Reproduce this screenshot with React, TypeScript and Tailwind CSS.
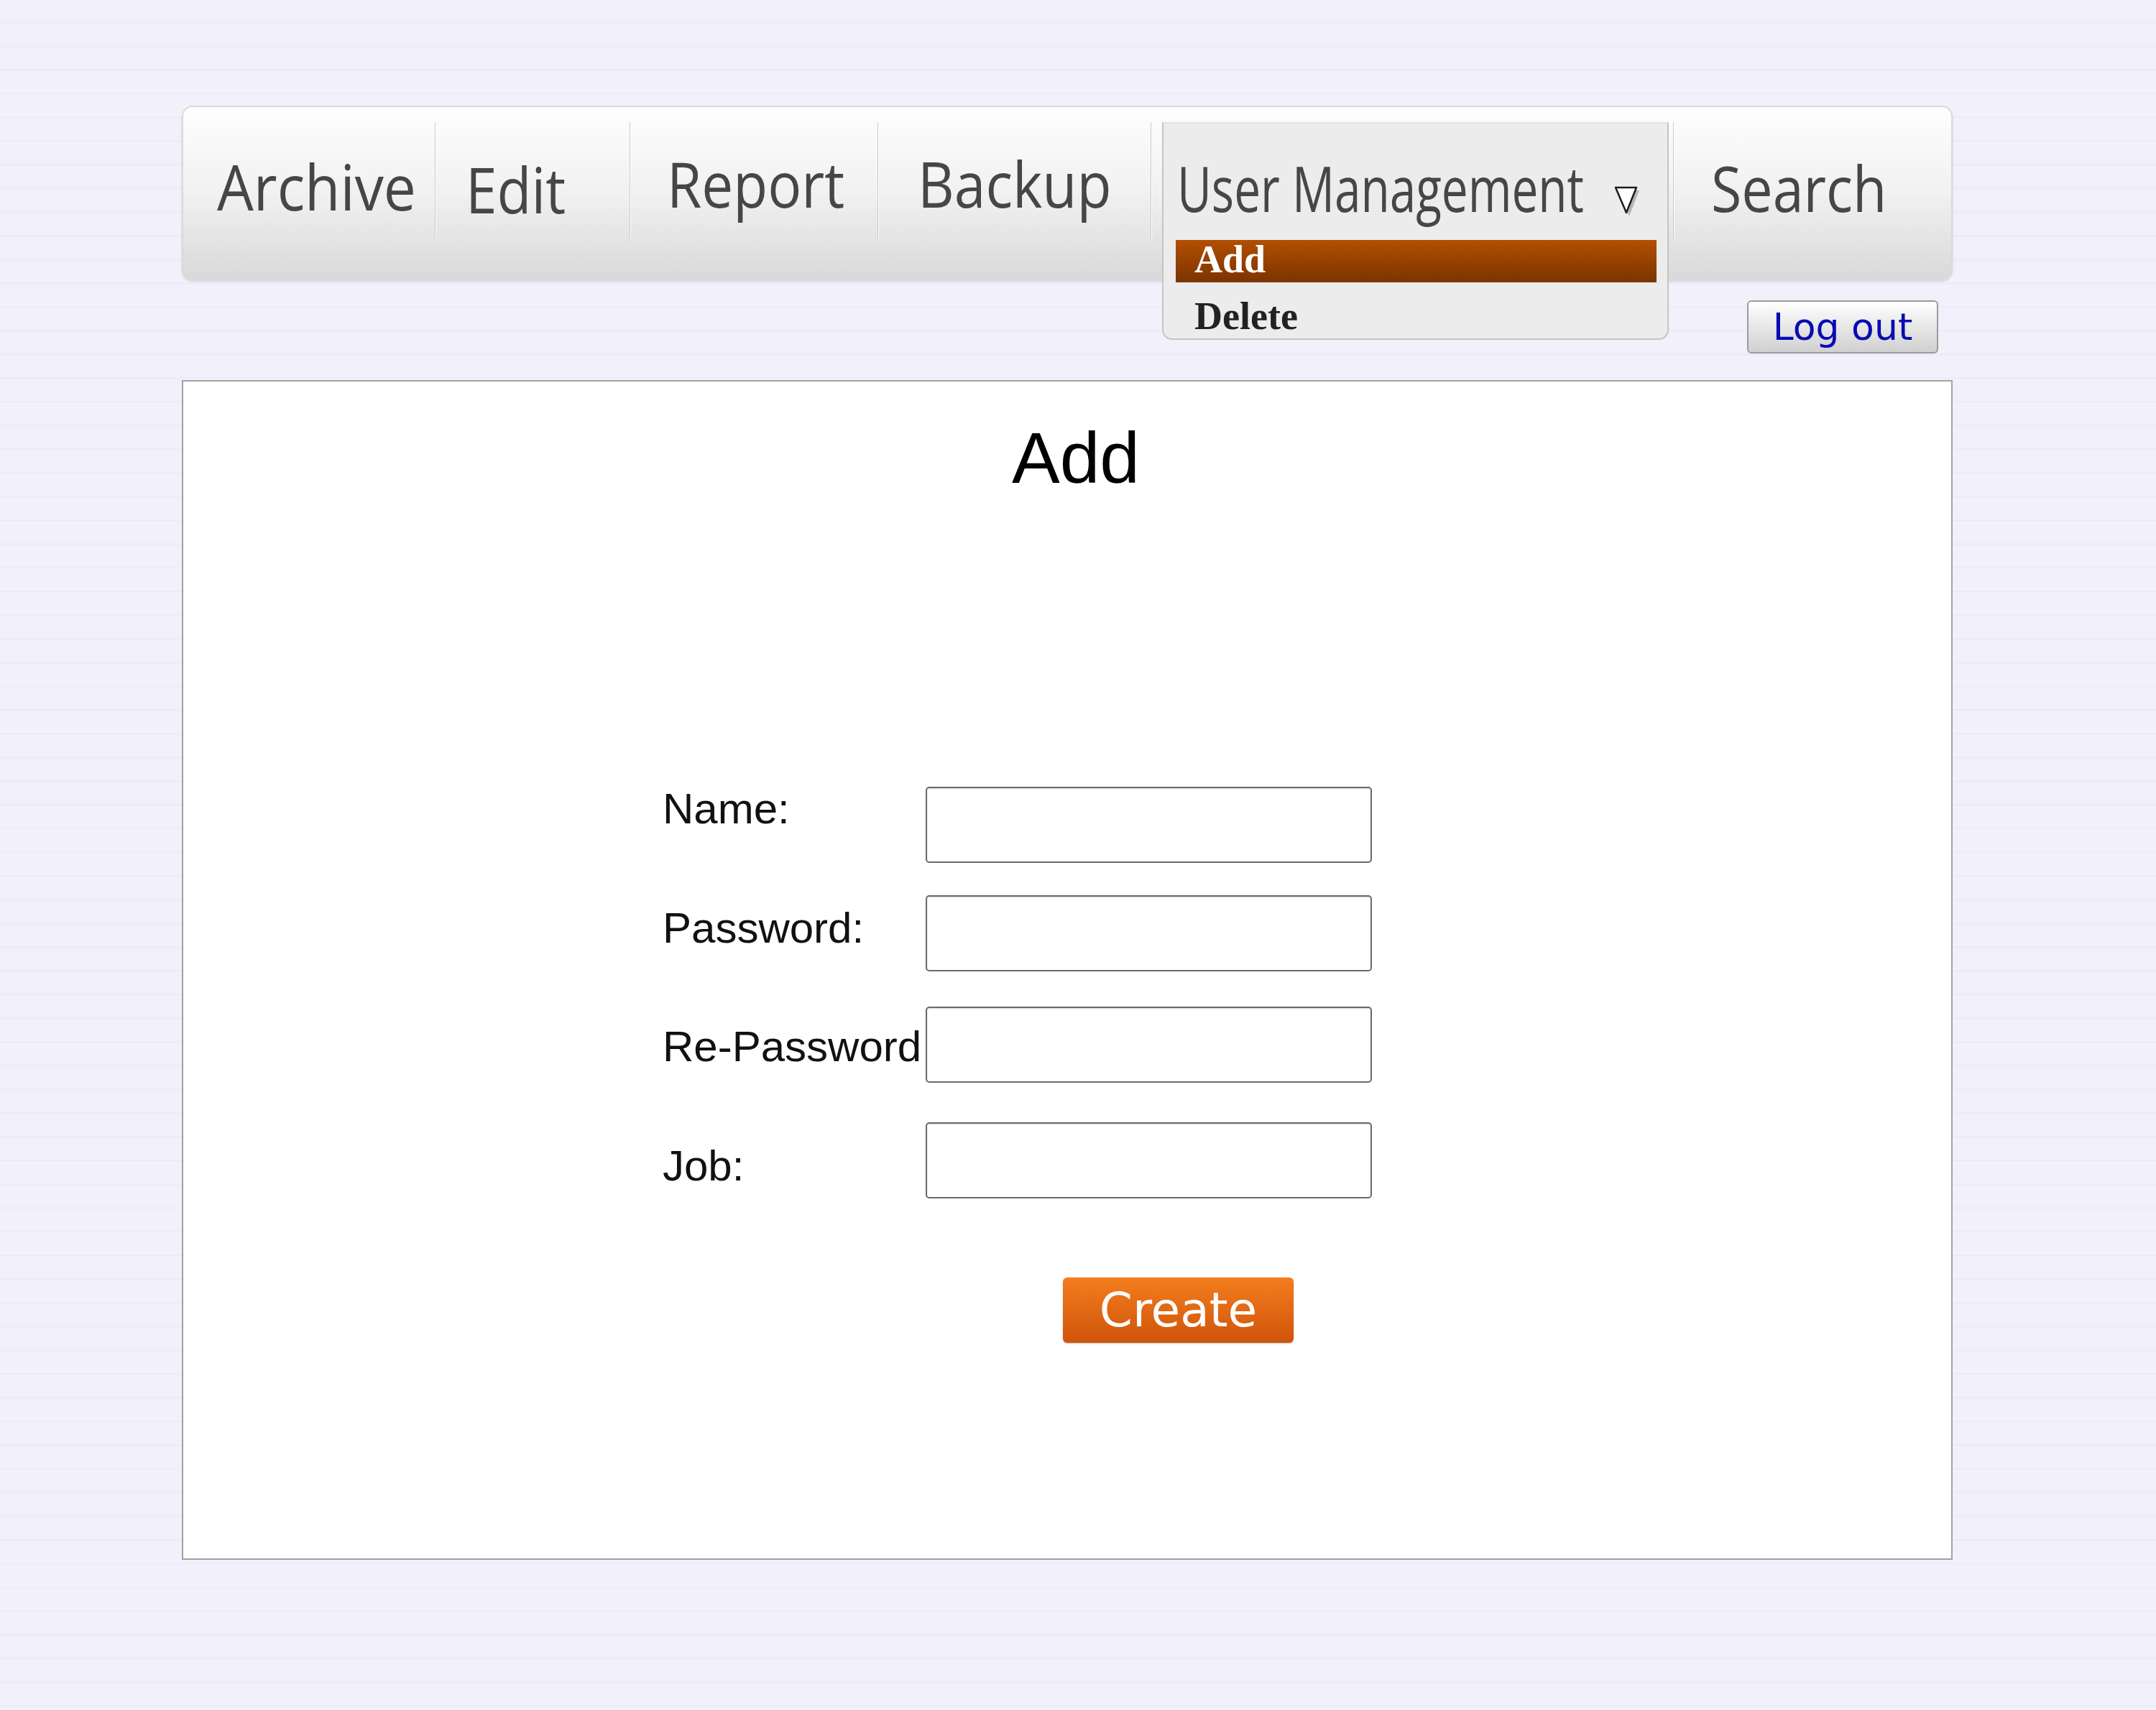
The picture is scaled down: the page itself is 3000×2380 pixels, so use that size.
import React from "react";

const menuFont = { fontFamily: '"Open Sans", "Noto Sans", sans-serif' };
const serif = { fontFamily: '"Liberation Serif", "Times New Roman", serif' };

function Separator() {
  return <div className="mt-[21px] h-[163px] w-[2px] shrink-0 border-l border-[#c9c9c9] bg-white" />;
}

function Triangle() {
  return (
    <svg width="38" height="44" viewBox="0 0 38 44">
      <polygon points="6,6 35,6 21,42" fill="#8a8a8a" opacity="0.55" />
      <polygon points="2,2 31,2 17,37" fill="#ffffff" stroke="#1c1c1c" strokeWidth="2.5" strokeLinejoin="round" />
    </svg>
  );
}

function FormRow({ label, rowClass, labelClass }: { label: string; rowClass: string; labelClass: string }) {
  return (
    <div className={`flex ${rowClass}`}>
      <div
        className={`w-[366px] shrink-0 text-[60px] leading-none text-[#111] ${labelClass}`}
        style={{ fontFamily: '"Liberation Sans", Arial, sans-serif' }}
      >
        {label}
      </div>
      <div className="h-[106px] w-[621px] rounded-[5px] border-2 border-[#6a6a6a] bg-white shadow-[inset_0_1px_2px_rgba(0,0,0,0.15)]" />
    </div>
  );
}

export default function App() {
  return (
    <div className="h-[2380px] w-[3000px] bg-[#f0effa] bg-[repeating-linear-gradient(to_bottom,#f1f0fb_0px,#f1f0fb_30px,#e9e8f6_31px,#f1f0fb_33px)] pt-[147px]">
      <div className="ml-[253px] w-[2464px]">
        {/* menu bar */}
        <div
          className="flex h-[243px] rounded-[15px] border-2 border-[#dadada] bg-gradient-to-b from-[#fefefe] via-[#f1f1f1] to-[#d9d9d9] text-[88px] leading-none whitespace-nowrap text-[#464646] shadow-[0_2px_3px_rgba(0,0,0,0.12)]"
          style={menuFont}
        >
          <div className="w-[350px] shrink-0 pl-[47px] pt-[66px]">
            <span className="inline-block origin-left scale-x-[0.913]">Archive</span>
          </div>
          <Separator />
          <div className="w-[269px] shrink-0 pl-[41px] pt-[70px]">
            <span className="inline-block origin-left scale-x-[0.89]">Edit</span>
          </div>
          <Separator />
          <div className="w-[343px] shrink-0 pl-[50px] pt-[62px]">
            <span className="inline-block origin-left scale-x-[0.89]">Report</span>
          </div>
          <Separator />
          <div className="w-[378px] shrink-0 pl-[54px] pt-[62px]">
            <span className="inline-block origin-left scale-x-[0.893]">Backup</span>
          </div>
          <Separator />
          <div className="relative w-[725px] shrink-0">
            <div className="absolute left-[14px] top-[21px] z-10 h-[303px] w-[705px] rounded-b-[14px] border-2 border-[#c4c4c4] border-t-[#e2e2e2] bg-[#ececec]">
              <div className="relative h-[164px] pl-[19px] pt-[45px]">
                <span className="inline-block origin-left scale-x-[0.746]">User Management</span>
                <span className="absolute left-[627px] top-[87px]">
                  <Triangle />
                </span>
              </div>
              <div
                className="ml-[17px] h-[59px] w-[669px] bg-gradient-to-b from-[#b34f02] to-[#7b3400] pl-[26px] text-[54px] font-bold leading-none text-white"
                style={serif}
              >
                <div className="-mt-[2px]">Add</div>
              </div>
              <div className="ml-[43px] mt-[20px] text-[54px] font-bold leading-none text-[#222]" style={serif}>
                Delete
              </div>
            </div>
          </div>
          <Separator />
          <div className="shrink-0 pl-[51px] pt-[68px]">
            <span className="inline-block origin-left scale-x-[0.877]">Search</span>
          </div>
        </div>

        {/* log out */}
        <div className="mr-[20px] mt-[28px] flex justify-end">
          <button
            className="flex h-[74px] w-[266px] items-center justify-center rounded-[6px] border-2 border-[#9b9b9b] bg-gradient-to-b from-white to-[#d0d0d0] text-[52px] leading-none text-[#0a0ab4]"
            style={{ fontFamily: '"DejaVu Sans", Verdana, sans-serif' }}
          >
            Log out
          </button>
        </div>

        {/* content panel */}
        <div className="mt-[37px] h-[1642px] border-2 border-[#a2a2a2] bg-white">
          <div
            className="pl-[24px] pt-[56px] text-center text-[100px] leading-none text-black"
            style={{ fontFamily: '"Liberation Sans", Arial, sans-serif' }}
          >
            Add
          </div>

          <div className="ml-[667px] mt-[408px] flex flex-col">
            <FormRow label="Name:" rowClass="" labelClass="pt-[1px]" />
            <FormRow label="Password:" rowClass="mt-[45px]" labelClass="pt-[16px]" />
            <FormRow label="Re-Password" rowClass="mt-[49px]" labelClass="pt-[26px]" />
            <FormRow label="Job:" rowClass="mt-[55px]" labelClass="pt-[31px]" />
          </div>

          <button
            className="ml-[1224px] mt-[110px] flex h-[91px] w-[321px] items-center justify-center rounded-[6px] bg-gradient-to-b from-[#f47d1e] to-[#cf540a] text-[66px] leading-none text-white shadow-[0_1px_2px_rgba(0,0,0,0.25)]"
            style={{ fontFamily: '"DejaVu Sans", Verdana, sans-serif' }}
          >
            Create
          </button>
        </div>
      </div>
    </div>
  );
}
